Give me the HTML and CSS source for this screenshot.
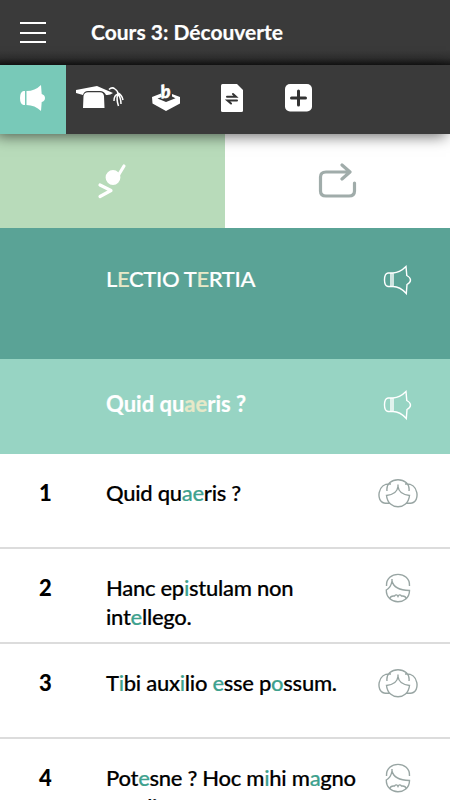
FILE: index.html
```html
<!DOCTYPE html>
<html lang="fr">
<head>
    <meta charset="UTF-8">
    <meta name="viewport" content="width=device-width, initial-scale=1.0">
    <title>Cours 3: Découverte</title>
    <link rel="stylesheet" href="styles.css">
</head>
<body>
    <!-- shared icons -->
    <svg class="defs" width="0" height="0">
        <symbol id="horn" viewBox="0 0 40 40">
            <path d="M13 13 H10 Q6.500 13.500 6.500 20 Q6.500 26 10 26.500 H13 Z M13 13 H15 V26.500 H13 M15 13 Q22 12.500 28 6.500 L28.800 15.500 Q32.500 17.500 32.500 20 Q32.500 22.500 29 24.500 L28.300 33.500 Q22 26.500 15 26.500"/>
        </symbol>
        <symbol id="woman" viewBox="0 0 40 30">
            <path d="M9 13 C7 -2 33 -2 31 13 M13 6 C-1 4.500 -2 23.500 6 25 Q8.500 25.500 11.500 25.200 M27 6 C41 4.500 42 23.500 34 25 Q31.500 25.500 28.500 25.200 M20 6.500 V8.500 Q19 16.500 8.500 17.500 C10 32.500 30 32.500 31.500 17.500 Q21 16.500 20 8.500"/>
        </symbol>
        <symbol id="man" viewBox="0 0 40 30">
            <path d="M8.500 13 C7.500 -2.500 32.500 -2.500 31.500 13 M14 6 V8 Q13 14.500 8.300 17 C8 32.500 31.500 32.500 31.500 17.500 Q16 17 14 8 M12 25.500 Q12.500 22.500 16.500 23 Q18.500 20.500 20 23.500 Q21.500 20.500 23.500 23 Q27.500 22.500 28 25.500"/>
        </symbol>
    </svg>

    <header class="header">
        <div class="menu-btn"><span></span><span></span><span></span></div>
        <h1 class="title">Cours 3: Découverte</h1>
    </header>

    <nav class="tabs">
        <a class="tab active">
            <svg width="28" height="28" viewBox="0 0 28 28">
                <path d="M6 7 H4.500 Q1 8 1 14 Q1 20 4.500 21 H6 Z M7.500 7 Q16 7 22 1 L22.700 10 Q26 11 26 14 Q26 17 22.700 18 L22 27 Q16 21 7.500 21 Z"/>
            </svg>
        </a>
        <a class="tab">
            <svg width="50" height="28" viewBox="0 0 50 28">
                <path d="M1 6 L22 2 L38 9 Q35 11.500 31 11 Q29 7 25 7 H13 Q9 7 8 11 L1 9 Z M8 24 L8.500 12 Q9 8.500 13 8.300 H25 Q28.500 8.500 29 12 L29.500 24 Z"/>
                <path class="line" d="M34 5.500 Q37 2.500 40 5 Q43 7 43 10 M43 10 Q39 11 39 17 M43 10 Q41 15 43.500 22 M43 10 Q46 14 46 20 M43 9 Q47 11 48 16"/>
            </svg>
        </a>
        <a class="tab">
            <svg class="inkwell" width="30" height="28" viewBox="0 0 30 28">
                <path d="M1 13 L10 9.500 L11 13 L6.500 14.500 L15 18 L24.500 14.200 L21 12.500 V10 L29 13 V19.500 L15 27 L1.500 19.500 Z"/>
                <text class="letter" x="10" y="14" transform="rotate(-8 14 10)">b</text>
            </svg>
        </a>
        <a class="tab">
            <svg width="22" height="28" viewBox="0 0 22 28">
                <path d="M1.500 0 H16 L22 6 V26.500 Q22 28 20.500 28 H1.500 Q0 28 0 26.500 V1.500 Q0 0 1.500 0 Z"/>
                <path class="dark thin" d="M6 12.700 H15 L12 10 M16 16.500 H6.500 L10 19.500"/>
            </svg>
        </a>
        <a class="tab">
            <svg width="27" height="28" viewBox="0 0 27 28">
                <rect width="27" height="27.500" rx="5"/>
                <path class="dark" d="M13.500 7 V21 M6.500 14 H20.500"/>
            </svg>
        </a>
    </nav>

    <div class="modes">
        <a class="mode selected">
            <svg width="32" height="36" viewBox="0 0 32 36">
                <circle cx="16" cy="14.500" r="5.800" fill="#fff"/>
                <path d="M20 14.500 L27 3 M3 22 L14 27.500 L3 33.500"/>
            </svg>
        </a>
        <a class="mode">
            <svg width="40" height="36" viewBox="0 0 40 36">
                <path d="M31 9 H8 Q2.500 9 2.500 14 V28 Q2.500 33 8 33 H31 Q36.500 33 36.500 28 V20 M24 2 L32 9 L24 16"/>
            </svg>
        </a>
    </div>

    <main class="lesson">
        <div class="row heading">
            <p class="text">L<em>E</em>CTIO T<em>E</em>RTIA</p>
            <svg class="icon horn"><use href="#horn"/></svg>
        </div>
        <div class="row subheading">
            <p class="text">Quid qu<em>ae</em>ris ?</p>
            <svg class="icon horn"><use href="#horn"/></svg>
        </div>
        <div class="row">
            <span class="num">1</span>
            <p class="text">Quid qu<em>ae</em>ris ?</p>
            <svg class="icon"><use href="#woman"/></svg>
        </div>
        <div class="row">
            <span class="num">2</span>
            <p class="text">Hanc ep<em>i</em>stulam non int<em>e</em>llego.</p>
            <svg class="icon"><use href="#man"/></svg>
        </div>
        <div class="row">
            <span class="num">3</span>
            <p class="text">T<em>i</em>bi aux<em>i</em>lio <em>e</em>sse p<em>o</em>ssum.</p>
            <svg class="icon"><use href="#woman"/></svg>
        </div>
        <div class="row">
            <span class="num">4</span>
            <p class="text">Pot<em>e</em>sne ? Hoc m<em>i</em>hi m<em>a</em>gno g<em>au</em>dio</p>
            <svg class="icon"><use href="#man"/></svg>
        </div>
    </main>
</body>
</html>
```

FILE: styles.css
```css
* {
    box-sizing: border-box;
}

html, body {
    margin: 0;
    padding: 0;
    height: 800px;
    overflow: hidden;
    background: #fff;
    color: #000;
    font-family: Lato, sans-serif;
}

svg {
    display: block;
}

.defs {
    position: absolute;
}

.header {
    display: flex;
    height: 65px;
    padding: 18px 20px 0;
    background: linear-gradient(#3a3a3a 50px, #303030 58px, #171717 65px);
    color: #fff;
}

.menu-btn {
    display: flex;
    flex-direction: column;
    gap: 7.5px;
    width: 26px;
    margin: 4px 45px 0 0;
}

.menu-btn span {
    height: 2px;
    background: #fff;
}

.title {
    margin: 0;
    font-size: 21px;
    font-weight: bold;
    line-height: 28px;
    -webkit-text-stroke: 0.2px;
}

.tabs {
    position: relative;
    display: flex;
    height: 69px;
    background: #3a3a3a;
    box-shadow: -4px 2px 14px rgba(0, 0, 0, 0.6);
}

.tab {
    display: flex;
    align-items: center;
    justify-content: center;
    width: 66.4px;
    padding-bottom: 3px;
    fill: #fff;
}

.tab.active {
    background: #78c9b8;
}

.tab .line {
    fill: none;
    stroke: #fff;
    stroke-width: 1.5;
}

.tab .dark {
    fill: none;
    stroke: #333;
    stroke-width: 3;
    stroke-linecap: round;
}

.tab .thin {
    stroke-width: 2;
}

.inkwell {
    overflow: visible;
}

.letter {
    font-size: 18px;
    font-style: italic;
    font-weight: 900;
    stroke: #fff;
    stroke-width: 0.6;
}

.modes {
    display: flex;
    height: 94px;
}

.mode {
    display: flex;
    flex: 1;
    align-items: center;
    justify-content: center;
    fill: none;
    stroke: #a0acaa;
    stroke-width: 3.2;
    stroke-linecap: round;
    stroke-linejoin: round;
}

.mode.selected {
    background: #b8dbba;
    stroke: #fff;
}

.row {
    display: grid;
    grid-template-columns: 106px 260px 12px 40px;
    align-items: start;
    height: 95px;
    padding: 24px 32px 0 0;
    border-bottom: 2px solid #dcdcdc;
    font-size: 22px;
    line-height: 29px;
}

.num {
    padding-left: 39px;
    font-weight: 900;
}

.text {
    grid-column: 2;
    margin: 0;
    font-weight: 500;
    letter-spacing: -0.28px;
    -webkit-text-stroke: 0.2px;
}

.text em {
    color: #3ea18e;
    font-style: normal;
}

.icon {
    grid-column: 4;
    width: 40px;
    height: 30px;
    fill: none;
    stroke: #98a5a3;
    stroke-width: 1.4;
}

.horn {
    height: 40px;
    margin-top: -4px;
    stroke: #fff;
}

.heading {
    height: 131px;
    padding-top: 36px;
    border: 0;
    background: #5aa396;
    color: #fff;
}

.heading .text {
    letter-spacing: -0.35px;
}

.subheading {
    padding-top: 30px;
    border: 0;
    background: #97d4c3;
    color: #fff;
}

.subheading .text {
    font-weight: bold;
    letter-spacing: 0;
}

.heading em, .subheading em {
    color: #e6e8c8;
}
```
